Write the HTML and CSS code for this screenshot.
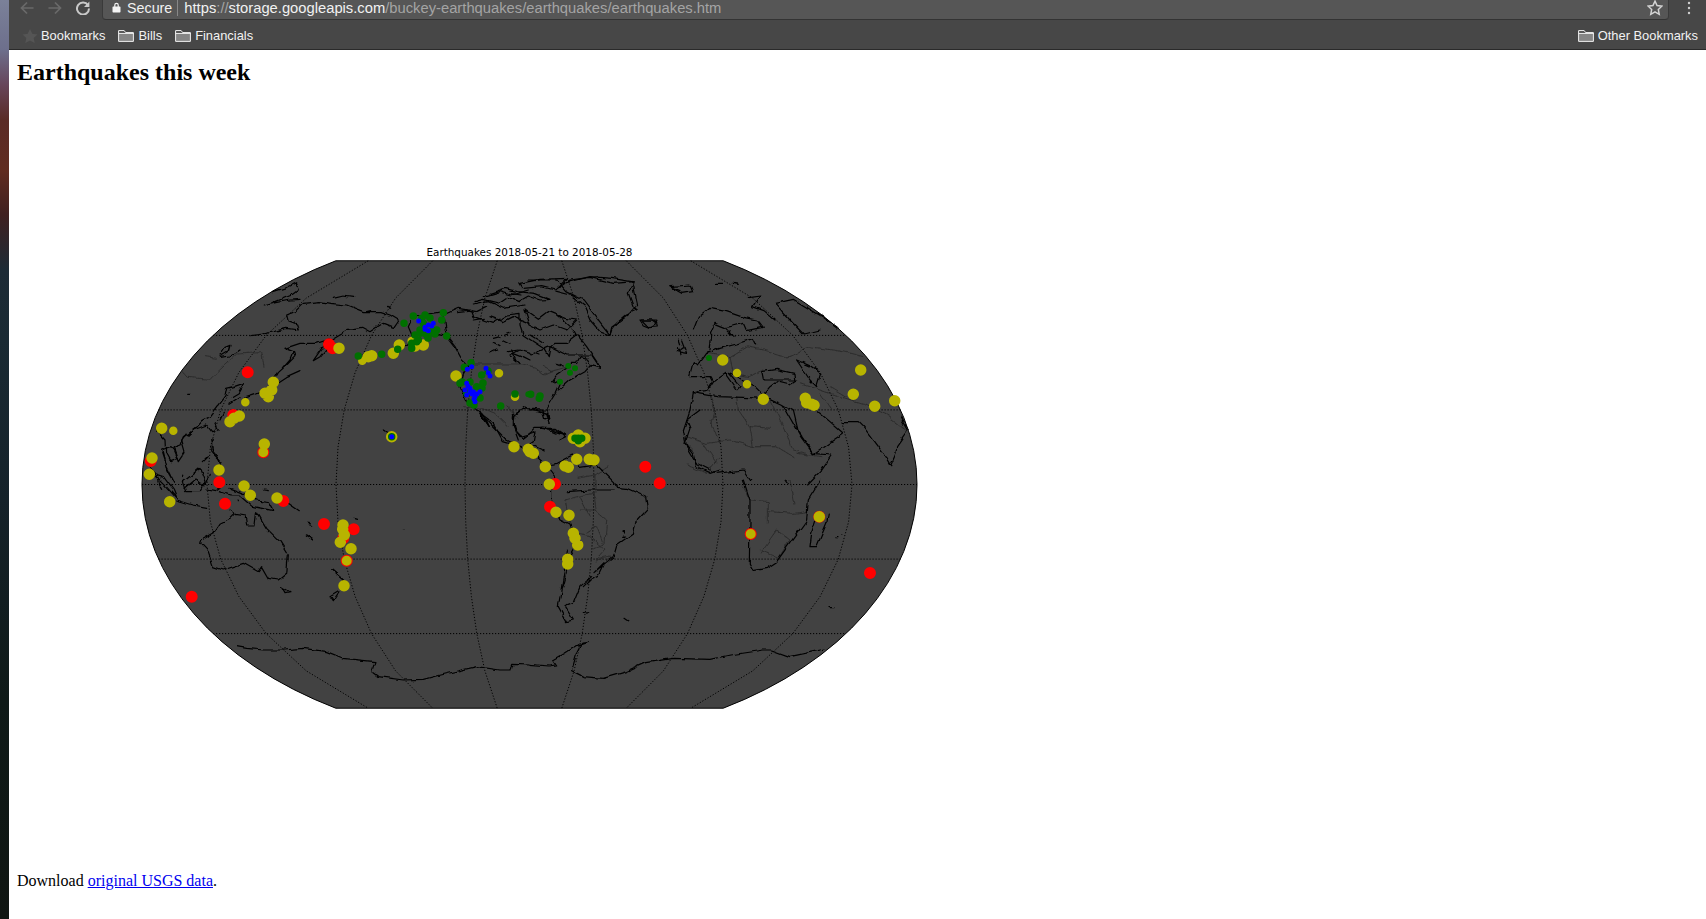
FILE: index.html
```html
<!DOCTYPE html>
<html lang="en">
<head>
<meta charset="utf-8">
<title>Earthquakes this week</title>
<link rel="stylesheet" href="styles.css">
</head>
<body>
<div class="desktop">
  <div class="wallpaper"></div>
  <div class="window">
    <div class="toolbar">
      <div class="nav">
        <svg class="nav-icon dim" viewBox="0 0 14 14"><path d="M13.5 7H2M7 1.5 1.5 7 7 12.5"/></svg>
        <svg class="nav-icon dim" viewBox="0 0 14 14"><path d="M.5 7H12M7 1.5 12.5 7 7 12.5"/></svg>
        <svg class="nav-icon light" viewBox="0 0 14 14"><path d="M12 4.2A6 6 0 1 0 13 7.5"/><path class="solid" d="M13.4 .6V6H8z"/></svg>
      </div>
      <div class="omnibox">
        <svg class="lock" viewBox="0 0 9 11"><path d="M2.2 4.6V3a2.3 2.3 0 0 1 4.6 0v1.6h1c.4 0 .7.3.7.7v4.5c0 .4-.3.7-.7.7H1.200c-.4 0-.7-.3-.7-.7V5.300c0-.4.3-.7.7-.7zM3.400 4.600h2.200V3a1.100 1.100 0 0 0-2.200 0z"/></svg>
        <span class="secure">Secure</span>
        <span class="sep"></span>
        <span class="url">https<span class="faint">://</span>storage.googleapis.com<span class="faint">/buckey-earthquakes/earthquakes/earthquakes.htm</span></span>
        <svg class="star" viewBox="0 0 14 14"><path d="m7 1 1.800 3.900 4.200.5-3.100 2.900.8 4.200L7 10.400l-3.700 2.100.8-4.200L1 5.400l4.200-.5z"/></svg>
      </div>
      <svg class="menu" viewBox="0 0 4 14"><circle cx="2" cy="2" r="1.200"/><circle cx="2" cy="7" r="1.200"/><circle cx="2" cy="12" r="1.200"/></svg>
    </div>
    <div class="bookmarks">
      <svg class="bm-star" viewBox="0 0 16 14"><path d="m8 0 2.300 4.800 5.200.6-3.800 3.600 1 5.100L8 11.600l-4.700 2.500 1-5.100L.5 5.400l5.200-.6z"/></svg>
      <span class="bm-label first">Bookmarks</span>
      <svg class="folder" viewBox="0 0 16 12"><path class="folder-fill" d="M1 3.500h14V11H1z"/><path d="M.6 11.400V.6h5.600l1.500 2h7.700v8.800zM.6 3.400h14.800"/></svg>
      <span class="bm-label">Bills</span>
      <svg class="folder" viewBox="0 0 16 12"><path class="folder-fill" d="M1 3.500h14V11H1z"/><path d="M.6 11.400V.6h5.600l1.500 2h7.700v8.800zM.6 3.400h14.800"/></svg>
      <span class="bm-label">Financials</span>
      <svg class="folder other" viewBox="0 0 16 12"><path class="folder-fill" d="M1 3.500h14V11H1z"/><path d="M.6 11.400V.6h5.600l1.500 2h7.700v8.800zM.6 3.400h14.800"/></svg>
      <span class="bm-label">Other Bookmarks</span>
    </div>
    <main class="page">
      <h1 class="heading">Earthquakes this week</h1>
      <svg class="map" viewBox="120 240 820 480" role="img" aria-label="Map of earthquakes">
        <defs>
          <filter id="crinkle" filterUnits="userSpaceOnUse" x="120" y="240" width="820" height="480">
            <feTurbulence type="fractalNoise" baseFrequency=".1" numOctaves="2" seed="4" result="noise"/>
            <feDisplacementMap in="SourceGraphic" in2="noise" scale="5" xChannelSelector="R" yChannelSelector="G"/>
          </filter>
        </defs>
        <text class="map-title" x="529.500" y="256" text-anchor="middle">Earthquakes 2018-05-21 to 2018-05-28</text>
        <path class="globe" d="M335.750 260.800H723.250A387.500 258.300 0 0 1 723.250 708.200H335.750A387.500 258.300 0 0 1 335.750 260.800Z"/>
        <g class="grid">
          <path d="M213 335.400H846M158.500 409.900H900.500M142 484.500H917M158.500 559.100H900.500M213 633.600H846"/>
          <g transform="translate(529.500 484.500)">
            <path id="meridians" d="M32.300-223.700 44.600-186.400 52.700-149.100 58.100-111.900 61.800-74.600 63.800-37.300 64.500 0 63.800 37.300 61.800 74.600 58.100 111.900 52.700 149.100 44.600 186.400 32.300 223.700M96.800-223.700 133.900-186.400 158-149.100 174.400-111.900 185.300-74.600 191.500-37.300 193.500 0 191.500 37.300 185.300 74.600 174.400 111.900 158 149.100 133.900 186.400 96.800 223.700M161.300-223.700 223.200-186.400 263.300-149.100 290.700-111.900 308.800-74.600 319.100-37.300 322.500 0 319.100 37.300 308.800 74.600 290.700 111.900 263.300 149.100 223.200 186.400 161.300 223.700"/>
            <use href="#meridians" transform="scale(-1 1)"/>
          </g>
        </g>
        <g class="land">
        <!-- north-west quadrant: Siberia, Alaska, East Asia -->
        <g transform="translate(130 240) scale(.3333)">
          <path class="border" d="M155 390 175 412 240 418 285 375 320 342 395 338 402 380M225 350 260 355M1030 372H1175M1000 500 1060 505 1095 520 1135 560"/>
          <path class="coast" d="M400 198 440 188 480 180 510 178M430 155 470 142 497 128 505 150 485 165 430 188M360 290 400 285 430 275 470 265 505 270 500 255 475 245 470 225 495 215 520 190 570 185 600 190 650 195 700 215 750 215 780 225 805 240 790 262 760 250 740 262 720 275 695 262 655 268 625 285 600 300 575 325 550 362 570 350 590 325M610 175 640 168 668 172M710 215 722 212M770 202 785 205M465 325 510 310 560 310 600 297M465 325 490 335 495 350 470 375 445 398 432 420M490 335 480 360 458 385M510 392 470 410 440 430M270 345 285 322 300 316 295 335 270 350M330 330 300 348 275 352M340 430 312 440 290 445 285 470 270 490 240 530 218 542 200 562 175 582 160 590 150 615 130 622 142 655 122 662 110 640 108 600 80 570M305 470 325 458 340 432M345 470 375 460 400 452M300 490 330 470M250 600 245 630 255 642 270 672 258 690M280 520 270 540M238 700 225 735 195 720 165 745M90 735 80 700 60 680M170 460H178M760 570 772 578M1090 310 1110 320M1120 300 1140 310M1150 340 1175 350M1060 170 1110 155 1145 165 1195 150M1030 195 1075 185 1120 205 1185 195M940 225 985 205 1040 215 1070 200M1080 230 1120 245 1150 230 1200 250M850 228 880 225 940 215 952 290 975 320 992 352 1016 375 1000 402 990 440 1010 482 1042 512 1075 560 1060 525M1042 512 1100 570 1130 600 1185 628M850 228 835 260 852 300 820 322M952 290 915 280 885 290M1180 505 1155 525 1150 560 1165 600M1200 340 1170 330 1140 345 1170 370M1200 510 1180 500"/>
        </g>
        <!-- Canada and Greenland -->
        <g transform="translate(440 260) scale(.3333)">
          <path class="border" d="M240 310 285 322M285 322 312 345 335 335 305 318M330 335 385 320M200 440 235 470"/>
          <path class="coast" d="M50 155 95 150 102 170 130 180 160 190 200 165 240 160 240 195 250 225 280 245 310 265 325 290 330 262 345 250 380 250 412 225 405 212 375 185 350 165M412 225 440 260 470 305 482 325 450 315 440 295 420 290 410 310 395 310 380 325 350 345 338 362 358 372 345 402 320 442 326 472 315 480 305 447 280 445 240 450 220 470 220 500 240 530M240 530 268 522 285 505 310 505 345 520M105 125 130 118 178 130 205 112 235 125 265 108 300 120 330 118 285 100 232 95 195 85 150 100M100 180 130 175M240 70 300 58 382 55 345 90 305 80 250 85 240 70M390 60 450 52 520 70 580 65 565 100 580 140 592 150 560 165 530 190 515 210 510 225 480 215 450 180 430 135 392 105 342 92 390 60M255 150 295 178 325 155 375 175 410 180 380 210 340 195 300 210 270 195 255 150M600 180 640 180 652 190 630 203 610 195 600 180M690 80 720 92M215 270 230 300M250 290 270 300M280 275 300 282M350 310 370 318M160 235 180 230M195 225 210 220M150 280 170 270M205 275 235 270M210 100 240 105M715 240 720 255M715 262 720 285"/>
        </g>
        <!-- Europe, Middle East, Russia -->
        <g transform="translate(530 240) scale(.3333)">
          <path class="border" d="M530 340 600 350 650 320 700 330 770 350M600 350 610 400 655 410 700 390M770 350 780 350 840 320 940 335 1000 350M810 430 870 450 930 470 1000 490 1070 525 1130 570M900 440 950 470M870 460 905 510M540 470 555 510 545 560M620 470 625 510 660 560 720 565M660 560 670 620 740 620 790 650M720 480 760 560 790 630 830 640M470 590 530 610 600 600 670 620M520 610 560 670M800 640 880 650"/>
          <path class="coast" d="M490 270 505 232 540 205 590 215 640 232 680 240 697 262 650 272 640 250 610 258 590 262M540 285 555 250 585 262 612 292 600 272M540 330 545 285M455 300 470 340 440 335 460 320M490 365 505 375 530 340 570 325 620 312 670 295 680 315M490 365 478 410 540 410 548 425 530 452 490 458M548 425 585 400 620 450 630 440 595 400 640 420 675 440 700 465 720 440 740 425 780 435 800 420 700 420 695 395 740 388 792 400 795 425M760 498 812 590 850 642 940 580 900 545 870 520 855 510M940 545 985 545 1000 560 1060 640 1082 677 1098 640 1100 620 1135 570 1112 530M490 458 480 510 460 570 470 620 500 670 560 700 640 690 662 722M490 458 560 470 640 472 720 476 755 492 790 512 805 575 850 640 905 645 870 695 830 735M800 360 840 420 860 440 872 400 845 380 800 360M735 190 790 178 880 232 925 265M735 190 780 240 820 282 870 270M655 170 690 165 668 200 702 212 735 240M420 140 480 135 488 155 455 160 420 140M555 133 575 133M610 130 625 133M335 240 380 240 385 258 355 260 335 240M-10 120 80 120 110 155 160 180 190 220 240 285 245 262 295 225 320 195 305 125 245 115 180 110 100 130M0 345 60 320 110 345 185 345 210 382 180 378 165 395 120 420 85 450M0 505 50 520 60 550M0 285 40 310M30 565 75 565 110 590 90 600"/>
        </g>
        <!-- South-west: Indonesia and Oceania -->
        <g transform="translate(140 420) scale(.3333)">
          <path class="coast" d="M65 90 80 150 102 188 78 140 65 100M140 40 125 60 135 95 115 125 100 90 90 80 65 90M40 160 70 190 110 235 100 210 70 170 40 160M110 240 160 255 200 262M130 185 180 145 195 185 180 215 140 215 130 185M200 210 225 215 240 205M215 60 225 110 240 125M190 125 205 110M240 215 270 225 300 225 340 260 400 272 385 245 350 240 310 220 270 205M445 250 478 272M370 210 385 212M295 240V245M505 305 515 318M498 345 520 360M640 295 650 298M575 450 610 480 620 488M225 10 235 30 215 35 200 15 160 30 145 45M125 165V170M60 200 65 208M270 270 285 280"/>
        </g>
        <!-- South-west: Australia, New Zealand, Antarctica -->
        <g transform="translate(130 480) scale(.3333)">
          <path class="coast" d="M215 180 250 160 270 130 300 115 315 100 345 105 350 135 375 135 380 95 410 145 450 185 475 225 470 280 445 300 415 295 395 260 385 275 340 250 280 270 250 260 235 215 212 190 215 180M455 320 480 335 465 338 455 320M625 335 600 350 610 365 630 335M605 270 640 300 630 320M535 125 545 138M526 165 549 180M820 146H824M320 500 350 505 400 510 460 510 520 505 590 515 640 535 735 545 725 575 745 590 820 600 880 598 930 585 1040 560 1110 570 1140 570 1145 550 1200 552"/>
        </g>
        <!-- South-east: South America, Africa, Antarctica -->
        <g transform="translate(480 410) scale(.3333)">
          <path class="border" d="M255 270 300 258 340 250 345 300 380 330 375 400 340 415M255 270 270 345M290 205 345 195 345 250M345 195 385 170M300 300 345 300M320 370 350 350 370 400M300 260 330 320M345 450 400 440M620 100 640 120M620 165 680 190 720 140M690 30 720 100"/>
          <path class="coast" d="M0 10 40 40 70 95 120 110 170 140 198 165 232 160 280 135 300 172 350 165 400 215 410 232 440 235 500 262 505 292 470 330 460 370 410 405 400 440 345 485 372 458 352 500 330 510 310 530M232 210 215 235 215 280 240 330 270 345 290 400 272 430 255 500 245 535M198 165 232 210M260 245 330 240 400 240M100 10 105 60 130 85 150 70 165 65 160 95 145 105 170 110 190 120M185 55 225 60 255 75 215 62M150 0 200 0 210 40M0 10 25 50M615 100 630 55 620 30 660 0M615 100 640 130 650 170 690 190 720 180M430 362V366M428 378H434"/>
        </g>
        <g transform="translate(530 480) scale(.3333)">
          <path class="border" d="M665 60 715 65 715 130M715 95 790 100 835 95M690 220 740 150 780 180 745 235 690 210M640 20 660 60M780 0 795 70M130 160 180 170 225 210 195 245"/>
          <path class="coast" d="M640 0 660 60 660 130 658 250 670 272 710 265 740 245 790 175 830 120 835 60 872 0M895 105 890 130 860 200 840 200 845 160 858 120M768 0 775 10M280 152V155M275 172H282M100 290 85 380 110 425 130 420 105 380 130 370 150 320 185 290M112 210 100 290M160 400 178 398M285 415 297 423M900 380H912M918 170H921M933 165H936M0 553 60 558 80 555 70 540 105 520 135 500 175 487 155 490 140 520 125 572 160 590 220 595 290 575 350 548 430 535 540 538 600 525 700 510 725 510 780 530 850 515 885 507"/>
        </g>
        </g>
        <!-- Earthquake markers, largest magnitude drawn first -->
        <path class="quake red" d="M329 344.300h0M332.700 348.300h0M247.700 372.300h0M233.300 415h0M263.300 452.300h0M150.700 461h0M219.300 482.300h0M225 503.700h0M283.300 501h0M324 524h0M353.700 529.300h0M343.300 538.300h0M346.700 560.700h0M191.700 596.700h0M645.300 466.700h0M659.700 483.300h0M555 484h0M550 506.700h0M750.700 534h0M819.300 516.700h0M870 573h0"/>
        <path class="quake yellow" d="M339 348.300h0M368.300 356.700h0M371.700 355.700h0M393.300 353.300h0M399.300 345h0M415 346h0M423.300 345h0M456 376h0M273.300 382.300h0M271.700 390h0M265 393.300h0M268.300 396.700h0M239.300 416h0M234 418.300h0M230 421.700h0M161.700 428.300h0M264.300 444h0M152 458h0M149.300 474.300h0M219 470h0M244 486h0M391.700 436.700h0M514 446.700h0M528.300 449.300h0M530 451.700h0M533.300 453.300h0M545.300 466.700h0M576.700 459.300h0M565 466h0M568.300 467.300h0M589.300 459.300h0M594 460h0M549.300 484.300h0M556 512.300h0M569 515.300h0M573.300 533.300h0M575 538.300h0M577.700 545h0M567.700 559.300h0M567.700 564h0M573.300 438.300h0M578.300 435h0M585 438.300h0M580 441.700h0M169.700 501.700h0M250.300 495.300h0M277 498h0M343 525h0M342.700 529.300h0M344.300 535h0M340.300 542.300h0M351 548.700h0M344 585.700h0M819.300 516.700h0M722.700 360h0M763.300 399.300h0M805.300 398.300h0M806.700 402.700h0M811.700 404.300h0M814 405.300h0M853.300 394.300h0M860.700 370h0M874.700 406.300h0M894.700 400.700h0"/>
        <path class="quake yellow ring" d="M263.300 452.300h0M346.700 560.700h0M750.700 534h0"/>
        <path class="quake yellow small" d="M362.300 360.700h0M411.700 341h0M499 373.300h0M245.300 402.300h0M173.300 430.700h0M515 396.700h0M737 373h0M747 384.300h0"/>
        <path class="quake green" d="M413.300 316h0M421.700 318.300h0M443.300 312.700h0M404 323.300h0M420 330h0M436.700 330h0M441.700 320h0M418.300 340h0M411.700 343.300h0M411.700 348.300h0M446.700 336h0M431.700 331.700h0M426.700 335h0M423.300 323.300h0M416.700 341.700h0M430 318h0M425 315h0M421 333h0M415 335h0M435 334h0M428 338h0M358.300 356h0M381.700 354.300h0M397.700 349.300h0M464.300 367.300h0M471 362.700h0M481.700 375h0M488 371h0M460 383.300h0M476.700 386.700h0M483 383h0M466.700 393.300h0M471.700 403.300h0M476.700 396.700h0M462 382h0M470 382h0M482 388h0M480 398h0M470 403h0M474 405h0M500.700 406h0M515 394h0M530.700 394.300h0M540 396h0M539.300 398.300h0M391.700 436.700h0M575 438.300h0M578.300 438.300h0M581.700 438.300h0M578.300 440.700h0"/>
        <path class="quake green small" d="M528.300 394.300h0M568.300 366h0M575 368.300h0M570 372.700h0M560 381.700h0M709 358h0"/>
        <path class="quake blue" d="M418.700 321h0M428.300 325h0M433.300 323.300h0M425 329.300h0M428.300 330.700h0M431.700 326h0M425 327.300h0M467.300 369.300h0M471.700 366.700h0M486 368.300h0M488.300 372.700h0M490 376h0M466.700 383.300h0M470 388.300h0M465 390h0M473.300 391.700h0M466.700 395h0M475 396.700h0M480 391.700h0M475 401.700h0M468 386h0M472 394h0M477 394h0M470 392h0M474 399h0M391.700 436.700h0"/>
      </svg>
      <p class="download">Download <a href="#usgs">original USGS data</a>.</p>
    </main>
  </div>
</div>
</body>
</html>
```
FILE: styles.css
```css
* { box-sizing: border-box; }
html, body { margin: 0; height: 100%; overflow: hidden; background: #fff; }

.desktop {
  display: grid;
  grid-template-columns: 9px minmax(0, 1fr);
  height: 919px;
}

.wallpaper {
  background: linear-gradient(180deg,
    #7b8199 0, #6d6f8c 50px, #67455a 85px, #5a2b26 120px, #612c20 170px,
    #3f2020 215px, #1d2b36 270px, #1a2a33 340px, #15222a 500px, #0f1a18 700px, #101612 919px);
}

.window {
  display: flex;
  flex-direction: column;
  min-width: 0;
  background: #fff;
}

.toolbar {
  display: flex;
  align-items: flex-start;
  height: 20px;
  padding-right: 15px;
  background: #474747;
}

.nav {
  display: flex;
  flex: none;
  align-items: center;
  gap: 14px;
  width: 93px;
  height: 16px;
  padding-left: 11px;
}

.nav-icon {
  width: 14px;
  height: 14px;
  fill: none;
  stroke-width: 1.700;
}
.nav-icon.dim { stroke: #6a6a6a; }
.nav-icon.light { stroke: #c9c9c9; stroke-width: 2; }
.nav-icon .solid { fill: #c9c9c9; stroke: none; }

.omnibox {
  display: flex;
  align-items: center;
  flex: 1;
  min-width: 0;
  height: 20px;
  padding: 0 5px 4px 9px;
  background: #565656;
  border-bottom: 1px solid #333;
  border-left: 1px solid #3a3a3a;
  border-right: 1px solid #3a3a3a;
  border-bottom-left-radius: 4px;
  border-bottom-right-radius: 4px;
  font: 14.750px "Liberation Sans", sans-serif;
  color: #f1f1f1;
}

.lock { width: 9px; height: 11px; flex: none; fill: #f4f4f4; fill-rule: evenodd; }
.secure { margin-left: 6px; font-size: 14.300px; }
.sep { width: 1px; height: 16px; margin: 0 6px 0 5px; background: #888; }
.url { flex: 1; white-space: nowrap; }
.faint { color: #a4a4a4; }
.star { width: 16px; height: 16px; flex: none; fill: none; stroke: #d4d4d4; stroke-width: 1.300; }

.menu { width: 4px; height: 14px; flex: none; margin: 1px 0 0 18px; fill: #d0d0d0; }

.bookmarks {
  display: flex;
  align-items: center;
  height: 30px;
  padding: 2px 8px 0 13px;
  background: #474747;
  border-bottom: 1px solid #2a2a2a;
  font: 12.900px "Liberation Sans", sans-serif;
  color: #f2f2f2;
}

.bm-star { width: 16px; height: 14px; flex: none; fill: #555; }
.bm-label { margin-left: 4px; margin-right: 13px; white-space: nowrap; }
.bm-label.first { margin-left: 3px; }
.bm-label:last-child { margin-right: 0; }

.folder { width: 16px; height: 12px; fill: none; stroke: #f2f2f2; stroke-width: 1; flex: none; }
.folder-fill { fill: #858585; stroke: none; }
.folder.other { margin-left: auto; }

.page {
  flex: 1;
  padding: 8px 0 0 8px;
  color: #000;
  font-family: "Liberation Serif", "Times New Roman", serif;
}

.heading {
  margin: 0;
  font-size: 24px;
  line-height: 28px;
  font-weight: 700;
}

.map {
  display: block;
  width: 820px;
  height: 480px;
  margin: 154px 0 0 103px;
}

.map-title {
  font: 10.400px "DejaVu Sans", sans-serif;
  fill: #000;
}

.globe { fill: #424242; stroke: #000; stroke-width: 1; }

.grid path, .grid use {
  fill: none;
  stroke: #000;
  stroke-width: 1;
  stroke-dasharray: 1.200 1.800;
}

.land { filter: url(#crinkle); }

.coast {
  fill: none;
  stroke: #000;
  stroke-width: 3.600;
  stroke-linejoin: round;
  stroke-linecap: round;
}

.border {
  fill: none;
  stroke: #262626;
  stroke-width: 2.400;
}

.quake { fill: none; stroke-linecap: round; }
.quake.red { stroke: #ff0000; stroke-width: 12px; }
.quake.yellow { stroke: #b8b400; stroke-width: 11.500px; }
.quake.yellow.ring { stroke-width: 10px; }
.quake.yellow.small { stroke-width: 8.500px; }
.quake.green { stroke: #007000; stroke-width: 7.500px; }
.quake.green.small { stroke-width: 6px; }
.quake.blue { stroke: #0000ff; stroke-width: 5px; }

.download {
  margin: 152px 0 0;
  font-size: 16px;
  line-height: 18px;
}

.download a { color: #0000ee; }
```
